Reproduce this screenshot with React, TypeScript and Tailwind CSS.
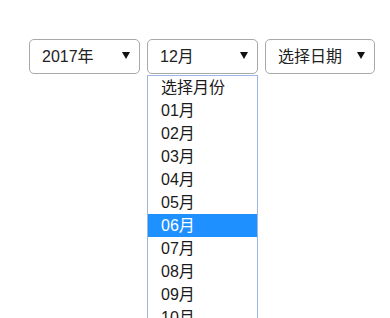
import React from 'react';

const months = [
  '选择月份',
  '01月',
  '02月',
  '03月',
  '04月',
  '05月',
  '06月',
  '07月',
  '08月',
  '09月',
  '10月',
  '11月',
  '12月',
];

function Arrow() {
  return (
    <svg width="8" height="7" viewBox="0 0 8 7" aria-hidden="true" className="shrink-0">
      <path d="M0 0 L8 0 L4 7 Z" fill="#111" />
    </svg>
  );
}

function FakeSelect({ label, width, children }: { label: string; width: string; children?: React.ReactNode }) {
  return (
    <div className={`relative ${width}`}>
      <div className="flex h-[35px] items-center justify-between rounded-[5px] border border-[#a9a9a9] bg-white pl-[12px] pr-[9px] text-[16px] text-[#222]">
        <span>{label}</span>
        <span className="-mt-[3px]">
          <Arrow />
        </span>
      </div>
      {children}
    </div>
  );
}

export default function App() {
  const selected = 6;

  return (
    <div
      className="relative h-[318px] w-[390px] overflow-hidden bg-white"
      style={{ fontFamily: '"Liberation Sans", "Noto Sans CJK SC", sans-serif' }}
    >
      <div className="flex gap-[7px] pl-[29px] pt-[39px]">
        <FakeSelect label="2017年" width="w-[111px]" />
        <FakeSelect label="12月" width="w-[111px]">
          <ul className="absolute left-0 top-[36px] z-10 w-[111px] border border-[#9db6e4] bg-white text-[16px] text-[#1a1a1a]">
            {months.map((m, i) => (
              <li
                key={m}
                className={[
                  'flex h-[23px] items-center pl-[13px]',
                  i === selected ? 'bg-[#1e90ff] text-white' : '',
                ].join(' ')}
              >
                {m}
              </li>
            ))}
          </ul>
        </FakeSelect>
        <FakeSelect label="选择日期" width="w-[110px]" />
      </div>
    </div>
  );
}
